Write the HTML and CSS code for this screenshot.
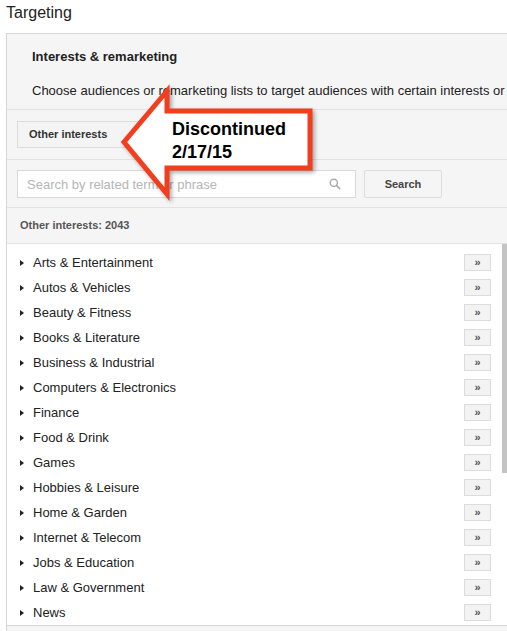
FILE: index.html
```html
<!DOCTYPE html>
<html>
<head>
<meta charset="utf-8">
<link rel="stylesheet" href="styles.css">
</head>
<body>
<div class="title">Targeting</div>
<div class="panel">
  <div class="head">
    <div class="head-title">Interests &amp; remarketing</div>
    <div class="head-desc">Choose audiences or remarketing lists to target audiences with certain interests or</div>
  </div>
  <div class="tabs">
    <div class="tab">Other interests</div>
  </div>
  <div class="search">
    <div class="input">
      <span class="placeholder">Search by related term or phrase</span>
      <svg class="mag" width="12" height="12" viewBox="0 0 12 12"><circle cx="4.8" cy="4.8" r="3.6" fill="none" stroke="#aaa" stroke-width="1.4"/><line x1="7.4" y1="7.4" x2="10.8" y2="10.8" stroke="#aaa" stroke-width="1.6" stroke-linecap="round"/></svg>
    </div>
    <div class="btn">Search</div>
  </div>
  <div class="count">Other interests: 2043</div>
  <div class="listwrap">
    <div class="list">
      <div class="row"><span class="tri"></span><span class="name">Arts &amp; Entertainment</span><span class="add">»</span></div>
      <div class="row"><span class="tri"></span><span class="name">Autos &amp; Vehicles</span><span class="add">»</span></div>
      <div class="row"><span class="tri"></span><span class="name">Beauty &amp; Fitness</span><span class="add">»</span></div>
      <div class="row"><span class="tri"></span><span class="name">Books &amp; Literature</span><span class="add">»</span></div>
      <div class="row"><span class="tri"></span><span class="name">Business &amp; Industrial</span><span class="add">»</span></div>
      <div class="row"><span class="tri"></span><span class="name">Computers &amp; Electronics</span><span class="add">»</span></div>
      <div class="row"><span class="tri"></span><span class="name">Finance</span><span class="add">»</span></div>
      <div class="row"><span class="tri"></span><span class="name">Food &amp; Drink</span><span class="add">»</span></div>
      <div class="row"><span class="tri"></span><span class="name">Games</span><span class="add">»</span></div>
      <div class="row"><span class="tri"></span><span class="name">Hobbies &amp; Leisure</span><span class="add">»</span></div>
      <div class="row"><span class="tri"></span><span class="name">Home &amp; Garden</span><span class="add">»</span></div>
      <div class="row"><span class="tri"></span><span class="name">Internet &amp; Telecom</span><span class="add">»</span></div>
      <div class="row"><span class="tri"></span><span class="name">Jobs &amp; Education</span><span class="add">»</span></div>
      <div class="row"><span class="tri"></span><span class="name">Law &amp; Government</span><span class="add">»</span></div>
      <div class="row"><span class="tri"></span><span class="name">News</span><span class="add">»</span></div>
    </div>
    <div class="scroll"><div class="thumb"></div></div>
  </div>
  <div class="foot"></div>
</div>

<div class="callout">
  <svg class="arrow" width="220" height="130" viewBox="110 80 220 130">
    <path d="M124 142 L167 91 L167 111 L310 111 L310 168 L167 168 L167 194 Z" fill="#fff" stroke="#f23d1f" stroke-width="5" stroke-linejoin="miter" stroke-miterlimit="10"/>
  </svg>
  <div class="callout-text">Discontinued<br>2/17/15</div>
</div>
</body>
</html>
```
FILE: styles.css
```css
html, body {
  margin: 0;
  padding: 0;
  overflow: hidden;
  background: #fff;
}
body {
  font-family: "Liberation Sans", Arial, sans-serif;
  color: #222;
  width: 507px;
  height: 631px;
  position: relative;
}
.title {
  height: 33px;
  line-height: 26px;
  padding-left: 6px;
  font-size: 16px;
  color: #222;
}
.panel {
  margin-left: 6px;
  width: 500px;
  border-left: 1px solid #d6d6d6;
  border-top: 1px solid #d6d6d6;
  background: #f5f5f5;
  overflow: hidden;
}
.head {
  padding: 15px 0 10px 25px;
  border-bottom: 1px solid #e2e2e2;
  overflow: hidden;
}
.head-title {
  font-size: 13px;
  font-weight: bold;
  line-height: 16px;
  color: #222;
}
.head-desc {
  margin-top: 18px;
  font-size: 13px;
  line-height: 16px;
  color: #222;
  white-space: nowrap;
  overflow: hidden;
}
.tabs {
  padding: 11px 10px;
  border-bottom: 1px solid #e2e2e2;
  display: flex;
}
.tab {
  height: 25px;
  line-height: 25px;
  padding: 0 50px 0 11px;
  border: 1px solid #dcdcdc;
  background: #f4f4f4;
  font-size: 11px;
  font-weight: bold;
  color: #333;
}
.search {
  display: flex;
  gap: 8px;
  padding: 10px 10px 9px;
  border-bottom: 1px solid #e2e2e2;
}
.input {
  height: 26px;
  border: 1px solid #d9d9d9;
  background: #fff;
  display: flex;
  align-items: center;
  justify-content: space-between;
  padding: 0 14px 0 9px;
  width: 314px;
}
.placeholder {
  font-size: 13px;
  color: #b5b5b5;
}
.mag {
  display: block;
}
.btn {
  width: 76px;
  height: 26px;
  line-height: 26px;
  text-align: center;
  border: 1px solid #dcdcdc;
  border-radius: 2px;
  background: #f5f5f5;
  font-size: 11px;
  font-weight: bold;
  color: #444;
}
.count {
  height: 35px;
  line-height: 35px;
  padding-left: 13px;
  font-size: 11px;
  font-weight: bold;
  color: #555;
  border-bottom: 1px solid #e2e2e2;
}
.listwrap {
  display: flex;
  background: #fff;
  border-bottom: 1px solid #d6d6d6;
}
.list {
  width: 495px;
  flex-shrink: 0;
  padding: 6px 0 0;
  height: 375px;
}
.row {
  height: 25px;
  display: flex;
  align-items: center;
  padding-left: 13px;
  padding-right: 11px;
}
.tri {
  width: 0;
  height: 0;
  border-top: 3.5px solid transparent;
  border-bottom: 3.5px solid transparent;
  border-left: 4px solid #222;
  margin-right: 9px;
}
.name {
  flex: 1;
  font-size: 13px;
  color: #222;
}
.add {
  width: 25px;
  height: 15px;
  line-height: 14px;
  text-align: center;
  border: 1px solid #dcdcdc;
  background: #f3f3f3;
  font-size: 11px;
  font-weight: bold;
  color: #555;
}
.scroll {
  flex: 1;
  background: #fff;
}
.thumb {
  width: 5px;
  height: 229px;
  background: #c4c4c4;
}
.foot {
  height: 10px;
  background: #f5f5f5;
}
.callout {
  position: absolute;
  left: 110px;
  top: 80px;
  width: 220px;
  height: 130px;
}
.arrow {
  display: block;
  filter: drop-shadow(2px 2px 2px rgba(0,0,0,0.35));
}
.callout-text {
  position: absolute;
  left: 62px;
  top: 38px;
  font-size: 18px;
  line-height: 23px;
  font-weight: bold;
  color: #000;
}
```
